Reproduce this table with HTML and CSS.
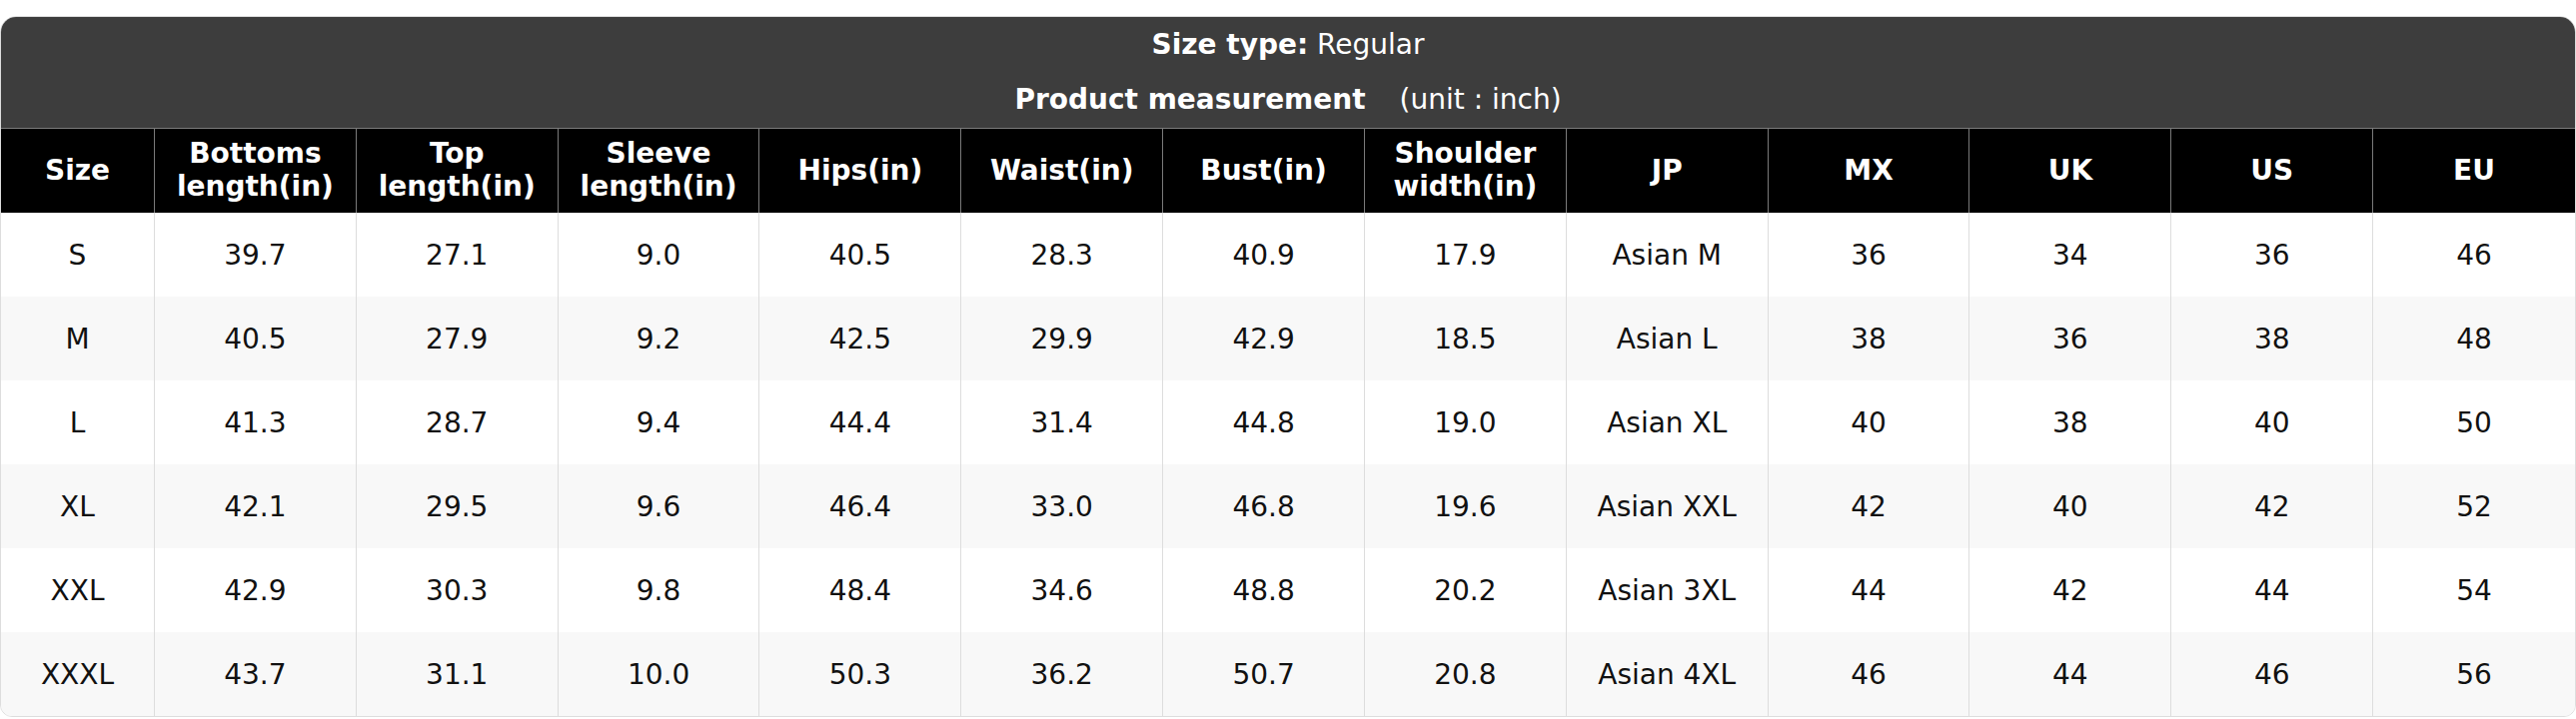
FILE: index.html
```html
<!DOCTYPE html>
<html lang="en">
<head>
<meta charset="utf-8">
<title>Size chart</title>
<link rel="stylesheet" href="styles.css">
</head>
<body>
<div class="chart">
  <div class="title">
    <div class="line"><b>Size type:</b> Regular</div>
    <div class="line"><b>Product measurement</b><span class="unit">(unit : inch)</span></div>
  </div>
  <table class="sizes">
    <colgroup>
      <col class="c-size">
      <col><col><col><col><col><col><col><col><col><col><col><col>
    </colgroup>
    <thead>
      <tr>
        <th>Size</th>
        <th>Bottoms length(in)</th>
        <th>Top length(in)</th>
        <th>Sleeve length(in)</th>
        <th>Hips(in)</th>
        <th>Waist(in)</th>
        <th>Bust(in)</th>
        <th>Shoulder width(in)</th>
        <th>JP</th>
        <th>MX</th>
        <th>UK</th>
        <th>US</th>
        <th>EU</th>
      </tr>
    </thead>
    <tbody>
      <tr><td>S</td><td>39.7</td><td>27.1</td><td>9.0</td><td>40.5</td><td>28.3</td><td>40.9</td><td>17.9</td><td>Asian M</td><td>36</td><td>34</td><td>36</td><td>46</td></tr>
      <tr><td>M</td><td>40.5</td><td>27.9</td><td>9.2</td><td>42.5</td><td>29.9</td><td>42.9</td><td>18.5</td><td>Asian L</td><td>38</td><td>36</td><td>38</td><td>48</td></tr>
      <tr><td>L</td><td>41.3</td><td>28.7</td><td>9.4</td><td>44.4</td><td>31.4</td><td>44.8</td><td>19.0</td><td>Asian XL</td><td>40</td><td>38</td><td>40</td><td>50</td></tr>
      <tr><td>XL</td><td>42.1</td><td>29.5</td><td>9.6</td><td>46.4</td><td>33.0</td><td>46.8</td><td>19.6</td><td>Asian XXL</td><td>42</td><td>40</td><td>42</td><td>52</td></tr>
      <tr><td>XXL</td><td>42.9</td><td>30.3</td><td>9.8</td><td>48.4</td><td>34.6</td><td>48.8</td><td>20.2</td><td>Asian 3XL</td><td>44</td><td>42</td><td>44</td><td>54</td></tr>
      <tr><td>XXXL</td><td>43.7</td><td>31.1</td><td>10.0</td><td>50.3</td><td>36.2</td><td>50.7</td><td>20.8</td><td>Asian 4XL</td><td>46</td><td>44</td><td>46</td><td>56</td></tr>
    </tbody>
  </table>
</div>
</body>
</html>
```
FILE: styles.css
```css
html, body {
  margin: 0;
  padding: 0;
  background: #ffffff;
}

body {
  padding-top: 16px;
  font-family: "DejaVu Sans", Verdana, sans-serif;
  font-size: 28px;
  color: #111111;
}

.chart {
  box-sizing: border-box;
  width: 2578px;
  border: 1px solid #dddddd;
  border-radius: 16px 16px 12px 12px;
  overflow: hidden;
}

.title {
  background: #3d3d3d;
  color: #ffffff;
  text-align: center;
  padding-bottom: 1px;
  border-bottom: 1px solid #7a7a7a;
}

.title .line {
  height: 55px;
  line-height: 55px;
  white-space: nowrap;
}

.title .unit {
  margin-left: 34px;
}

.sizes {
  width: 100%;
  table-layout: fixed;
  border-collapse: separate;
  border-spacing: 0;
}

.sizes .c-size {
  width: 154px;
}

.sizes th {
  background: #000000;
  color: #ffffff;
  font-weight: bold;
  height: 84px;
  padding: 0 10px;
  text-align: center;
  vertical-align: middle;
  line-height: 1.164;
  border-right: 1px solid #7a7a7a;
}

.sizes td {
  height: 84px;
  padding: 0 10px;
  text-align: center;
  vertical-align: middle;
  border-right: 1px solid #dddddd;
  background: #ffffff;
}

.sizes th:last-child,
.sizes td:last-child {
  border-right: none;
}

.sizes tbody tr:nth-child(even) td {
  background: #f8f8f8;
}
```
